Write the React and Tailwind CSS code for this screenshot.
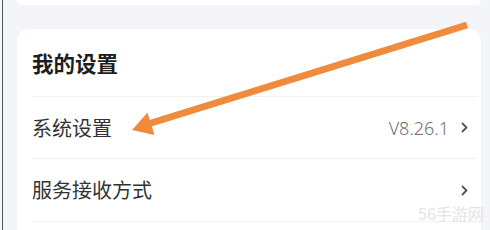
import React from "react";

function Chevron() {
  return (
    <svg width="7" height="11" viewBox="0 0 7 11" className="shrink-0">
      <polyline points="1.5,1.5 5.5,5.5 1.5,9.5" fill="none" stroke="#555" strokeWidth="1.8" strokeLinecap="round" strokeLinejoin="round" />
    </svg>
  );
}

export default function App() {
  return (
    <div
      className="relative w-[490px] h-[230px] overflow-hidden bg-[#f3f5f8] flex"
      style={{ fontFamily: '"Noto Sans CJK SC", "Noto Sans", sans-serif' }}
    >
      <div className="w-[2px] bg-[#f7f8fa]" />
      <div className="w-[1px] bg-[#555]" />
      <div className="flex-1 flex flex-col pl-[14px] pr-[9px]">
        <div className="h-[5px] bg-white rounded-b-[10px]" />
        <div className="mt-[24px] flex-1 bg-white rounded-t-[12px] pl-[15px] pr-[3px]">
          <div className="h-[68px] flex items-center border-b border-[#f0f1f3]">
            <span className="text-[21.5px] font-bold text-[#1e1e1e] leading-none">我的设置</span>
          </div>
          <div className="h-[62px] flex items-center justify-between border-b border-[#f0f1f3]">
            <span className="text-[20px] text-[#333] leading-none">系统设置</span>
            <div className="flex items-center gap-[12px] pr-[10px]">
              <span className="text-[18px] text-[#707070] leading-none font-light" style={{ fontFamily: '"Noto Sans", sans-serif' }}>V8.26.1</span>
              <Chevron />
            </div>
          </div>
          <div className="h-[63px] flex items-center justify-between border-b border-[#f0f1f3]">
            <span className="text-[20px] text-[#333] leading-none">服务接收方式</span>
            <div className="flex items-center pr-[10px]">
              <Chevron />
            </div>
          </div>
        </div>
      </div>
      <div className="absolute left-[418px] top-[205px] text-[16px] leading-none text-[#e4e4e4]">
        56手游网
      </div>
      <svg className="absolute inset-0 pointer-events-none" width="490" height="230" viewBox="0 0 490 230">
        <line x1="467" y1="25" x2="148" y2="124" stroke="#f08a3c" strokeWidth="7" strokeLinecap="butt" />
        <polygon points="132,130 147.5,112.5 154.5,135" fill="#f08a3c" />
      </svg>
    </div>
  );
}
